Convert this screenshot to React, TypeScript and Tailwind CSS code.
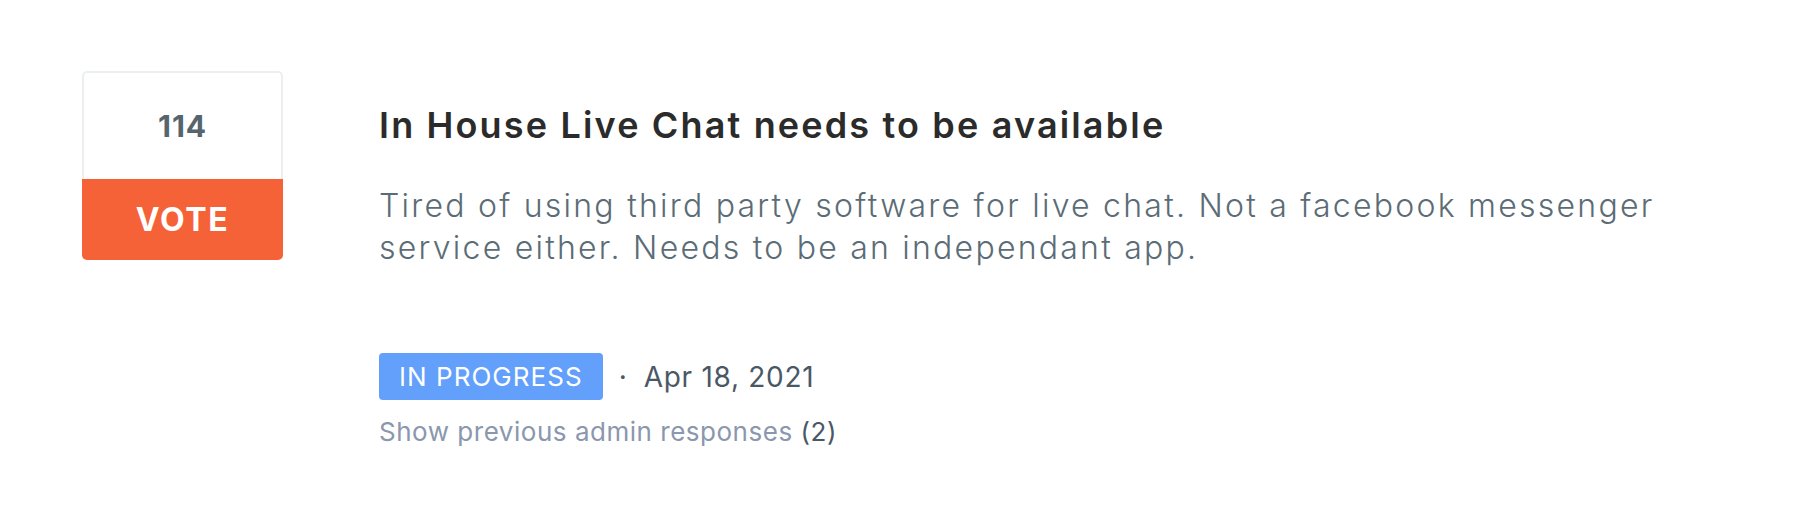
import React from "react";

function VoteBox() {
  return (
    <div className="flex w-[201px] shrink-0 flex-col">
      <div className="flex h-[108px] items-center justify-center rounded-t-[5px] border-x-2 border-t-2 border-[#eceff2] bg-white">
        <span className="text-[30px] font-bold leading-none tracking-[0.03em] text-[#56656d]">114</span>
      </div>
      <button className="flex h-[81px] items-center justify-center rounded-b-[5px] bg-[#f66238]">
        <span className="text-[32px] font-bold leading-none tracking-[0.05em] text-white">VOTE</span>
      </button>
    </div>
  );
}

export default function App() {
  return (
    <div className="min-h-[531px] w-full bg-white font-['Inter',sans-serif]">
      <div className="flex items-start pl-[82px] pt-[71px]">
        <VoteBox />
        <div className="ml-[96px] mt-[32px] flex w-[1340px] flex-col">
          <h1 className="text-[36px] font-semibold leading-[44px] tracking-[0.06em] text-[#2b2b2b]">
            In House Live Chat needs to be available
          </h1>
          <p className="mt-[38px] text-[32px] font-light leading-[42px] tracking-[0.07em] text-[#5b6c76]">
            Tired of using third party software for live chat. Not a facebook messenger service either. Needs to be an independant app.
          </p>
          <div className="mt-[84px] flex h-[47px] items-center">
            <span className="flex h-[47px] items-center rounded-[4px] bg-[#62a0fb] px-[20px] text-[26px] font-normal leading-[32px] tracking-[0.04em] text-white">
              IN PROGRESS
            </span>
            <span className="ml-[16px] mr-[17px] text-[28px] leading-[34px] text-[#4a5866]">·</span>
            <span className="text-[28px] font-normal leading-[34px] tracking-[0.025em] text-[#4a5866]">Apr 18, 2021</span>
          </div>
          <div className="mt-[16px] text-[26px] leading-[32px] tracking-[0.02em]">
            <span className="text-[#8a97ae]">Show previous admin responses</span>{" "}
            <span className="text-[#4a5866]">(2)</span>
          </div>
        </div>
      </div>
    </div>
  );
}
